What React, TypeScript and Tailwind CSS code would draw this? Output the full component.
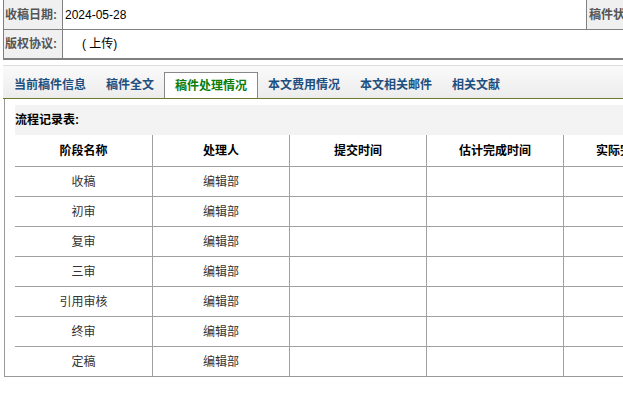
const tabs = ["当前稿件信息", "稿件全文", "稿件处理情况", "本文费用情况", "本文相关邮件", "相关文献"];
const heads = ["阶段名称", "处理人", "提交时间", "估计完成时间", "实际完成时间"];
const stages = ["收稿", "初审", "复审", "三审", "引用审核", "终审", "定稿"];

export default function App() {
  return (
    <div
      className="w-[623px] h-[399px] overflow-hidden bg-white text-[12px] text-black"
      style={{ fontFamily: '"Liberation Sans", "Noto Sans CJK SC", sans-serif' }}
    >
      {/* top info table */}
      <div className="ml-[3px] w-[800px] border-l border-[#808080]">
        <div className="flex h-[30px] border-b border-[#808080]">
          <div className="w-[59px] shrink-0 bg-[#f0f0f0] border-r border-[#808080] pl-px flex items-center font-bold text-[#555]">
            收稿日期:
          </div>
          <div className="w-[523px] shrink-0 pl-[2px] flex items-center">2024-05-28</div>
          <div className="flex-1 bg-[#f0f0f0] border-l border-[#808080] pl-[2px] flex items-center font-bold text-[#555]">
            稿件状态:
          </div>
        </div>
        <div className="flex h-[30px] border-b-2 border-[#808080]">
          <div className="w-[59px] shrink-0 bg-[#f0f0f0] border-r border-[#808080] pl-px flex items-center font-bold text-[#555]">
            版权协议:
          </div>
          <div className="flex-1 pl-[19px] flex items-center">( 上传)</div>
        </div>
      </div>

      {/* tabs */}
      <div className="mt-[5px] ml-[3px] w-[800px] h-[34px] border-t border-b border-t-[#dcdcdc] border-b-[#6b7b2b] bg-linear-to-b from-[#fafafa] to-[#ececec] flex items-end pl-px">
        {tabs.map((t, i) =>
          i === 2 ? (
            <div
              key={t}
              className="h-[26px] px-[10px] flex items-center bg-white border border-b-0 border-[#888] font-bold text-[#0a7d0a]"
            >
              {t}
            </div>
          ) : (
            <div key={t} className="h-[26px] px-[10px] flex items-center font-bold text-[#1d4f80]">
              {t}
            </div>
          )
        )}
      </div>

      {/* process panel */}
      <div className="ml-[4px] w-[800px] border-l border-b border-[#999] pt-[6px] pl-[10px]">
        <div className="h-[30px] bg-[#f3f3f3] flex items-center font-bold">流程记录表:</div>
        <div className="grid grid-cols-[138px_137px_137px_137px_137px]">
          {heads.map((h) => (
            <div key={h} className="h-[31px] border-r border-[#a0a0a0] flex items-center justify-center font-bold whitespace-nowrap">
              {h}
            </div>
          ))}
          {stages.map((s) =>
            [s, "编辑部", "", "", ""].map((c, j) => (
              <div
                key={s + j}
                className="h-[30px] border-t border-r border-[#a0a0a0] flex items-center justify-center text-[#333]"
              >
                {c}
              </div>
            ))
          )}
        </div>
      </div>
    </div>
  );
}
